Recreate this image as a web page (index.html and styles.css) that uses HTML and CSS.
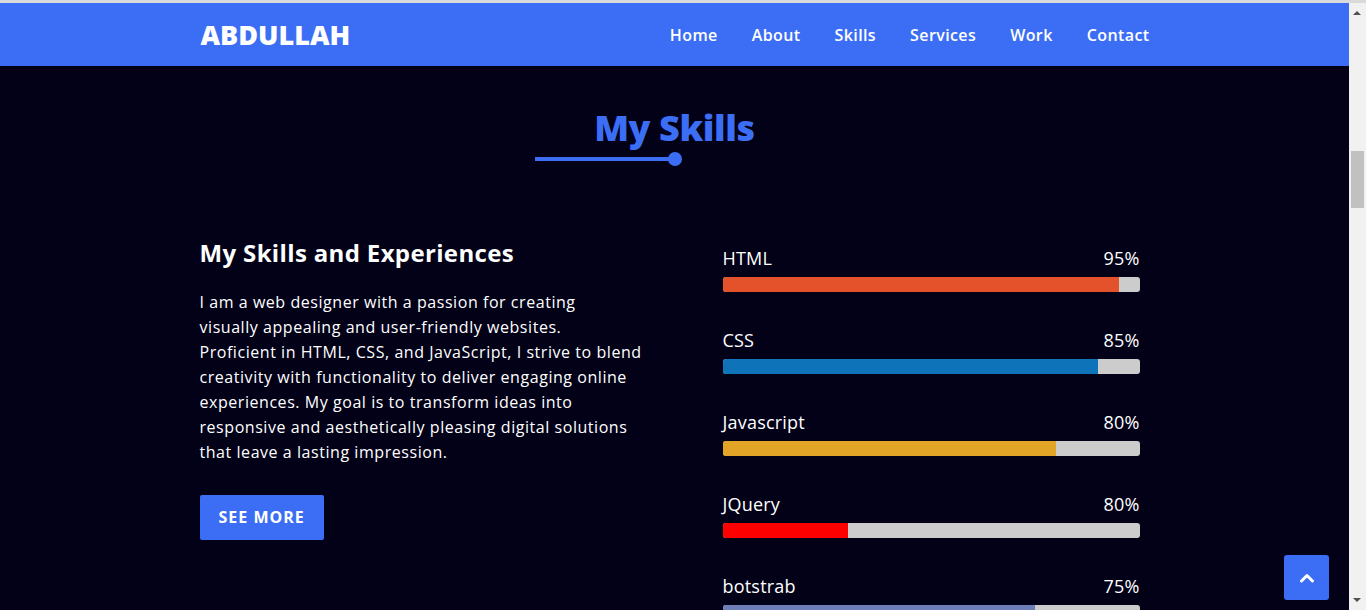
FILE: index.html
```html
<!DOCTYPE html>
<html lang="en">
<head>
<meta charset="utf-8">
<title>Abdullah - Skills</title>
<link rel="stylesheet" href="styles.css">
</head>
<body>
<div class="page">
  <header class="navbar">
    <div class="container nav-inner">
      <a class="logo" href="#">ABDULLAH</a>
      <nav class="menu">
        <a href="#">Home</a>
        <a href="#">About</a>
        <a href="#">Skills</a>
        <a href="#">Services</a>
        <a href="#">Work</a>
        <a href="#">Contact</a>
      </nav>
    </div>
  </header>

  <section class="skills">
    <div class="container">
      <div class="section-title">
        <h2>My Skills</h2>
        <div class="title-line"><span class="line"></span><span class="dot"></span></div>
      </div>
      <div class="skills-content">
        <div class="column left">
          <h3>My Skills and Experiences</h3>
          <p>I am a web designer with a passion for creating<br>
          visually appealing and user-friendly websites.<br>
          Proficient in HTML, CSS, and JavaScript, I strive to blend<br>
          creativity with functionality to deliver engaging online<br>
          experiences. My goal is to transform ideas into<br>
          responsive and aesthetically pleasing digital solutions<br>
          that leave a lasting impression.</p>
          <a class="btn" href="#">See More</a>
        </div>
        <div class="column right">
          <div class="bar">
            <div class="info"><span>HTML</span><span>95%</span></div>
            <div class="track"><div class="fill html" style="width:95%"></div></div>
          </div>
          <div class="bar">
            <div class="info"><span>CSS</span><span>85%</span></div>
            <div class="track"><div class="fill css" style="width:90%"></div></div>
          </div>
          <div class="bar">
            <div class="info"><span>Javascript</span><span>80%</span></div>
            <div class="track"><div class="fill js" style="width:80%"></div></div>
          </div>
          <div class="bar">
            <div class="info"><span>JQuery</span><span>80%</span></div>
            <div class="track"><div class="fill jq" style="width:30%"></div></div>
          </div>
          <div class="bar">
            <div class="info"><span>botstrab</span><span>75%</span></div>
            <div class="track"><div class="fill bs" style="width:75%"></div></div>
          </div>
        </div>
      </div>
    </div>
  </section>
</div>

<a class="scroll-up" href="#" aria-label="Back to top">
  <svg viewBox="0 0 16 16" width="16" height="16"><path d="M2.5 11 L8 5.5 L13.5 11" fill="none" stroke="#fff" stroke-width="3" stroke-linecap="round" stroke-linejoin="round"/></svg>
</a>

<div class="scrollbar" aria-hidden="true">
  <span class="arrow up"></span>
  <span class="thumb"></span>
  <span class="arrow down"></span>
</div>
</body>
</html>
```

FILE: styles.css
```css
* {
  margin: 0;
  padding: 0;
  box-sizing: border-box;
}

body {
  font-family: "Open Sans", "Liberation Sans", sans-serif;
  background: #020117;
  color: #fff;
  border-top: 3px solid #dadada;
}

a {
  text-decoration: none;
  color: inherit;
}

.page {
  margin-right: 17px;
}

.container {
  width: 950px;
  margin: 0 auto;
}

.navbar {
  background: #3c6ef5;
  height: 63px;
}

.nav-inner {
  height: 100%;
  display: flex;
  align-items: center;
  justify-content: space-between;
}

.logo {
  font-size: 27px;
  font-weight: 800;
  color: #fff;
  padding-left: 1px;
}

.menu {
  display: flex;
  gap: 34px;
}

.menu a {
  font-size: 16px;
  font-weight: 600;
  letter-spacing: 0.4px;
  color: #fff;
}

.skills {
  padding-top: 38px;
  padding-bottom: 60px;
}

.section-title {
  display: flex;
  flex-direction: column;
  align-items: center;
}

.section-title h2 {
  font-size: 36px;
  font-weight: 800;
  letter-spacing: -0.4px;
  color: #3c6ef5;
  line-height: 48px;
}

.title-line {
  display: flex;
  align-items: center;
  margin-top: 0;
  transform: translateX(-66px);
}

.title-line .line {
  width: 136px;
  height: 4px;
  background: #3c6ef5;
}

.title-line .dot {
  width: 14px;
  height: 14px;
  border-radius: 50%;
  background: #3c6ef5;
  margin-left: -3px;
}

.skills-content {
  display: flex;
  justify-content: space-between;
  margin-top: 71px;
}

.column.left {
  width: 460px;
}

.column.left h3 {
  font-size: 24px;
  font-weight: 700;
  letter-spacing: 0.35px;
  line-height: 32px;
  margin-bottom: 21px;
}

.column.left p {
  font-size: 16px;
  line-height: 25px;
  font-weight: 400;
  letter-spacing: 0.55px;
  white-space: nowrap;
  margin-bottom: 30px;
}

.btn {
  display: inline-block;
  background: #3c6ef5;
  color: #fff;
  font-size: 16px;
  font-weight: 700;
  text-transform: uppercase;
  letter-spacing: 1px;
  padding: 0 19px;
  height: 45px;
  line-height: 45px;
  border-radius: 2px;
}

.column.right {
  width: 417px;
  margin-right: 10px;
  padding-top: 7px;
  display: flex;
  flex-direction: column;
  gap: 34px;
}

.info {
  display: flex;
  justify-content: space-between;
  font-size: 18px;
  font-weight: 500;
  letter-spacing: 0.2px;
  line-height: 28px;
  margin-bottom: 5px;
}

.track {
  height: 15px;
  background: #cccccc;
  border-radius: 3px;
  overflow: hidden;
}

.fill {
  height: 100%;
}

.fill.html { background: #e3522a; }
.fill.css { background: #0e73b8; }
.fill.js { background: #e2a427; }
.fill.jq { background: #ff0000; }
.fill.bs { background: #6e7eb8; }

.scroll-up {
  position: fixed;
  right: 37px;
  bottom: 10px;
  width: 45px;
  height: 45px;
  background: #3c6ef5;
  border-radius: 3px;
  display: flex;
  align-items: center;
  justify-content: center;
}

.scrollbar {
  position: fixed;
  top: 3px;
  right: 0;
  bottom: 0;
  width: 17px;
  background: #f1f1f1;
}

.scrollbar .thumb {
  position: absolute;
  left: 2px;
  right: 2px;
  top: 148px;
  height: 57px;
  background: #c1c1c1;
}

.scrollbar .arrow {
  position: absolute;
  left: 4px;
  width: 0;
  height: 0;
  border-left: 4px solid transparent;
  border-right: 4px solid transparent;
}

.scrollbar .arrow.up {
  top: 8px;
  border-bottom: 4px solid #505050;
}

.scrollbar .arrow.down {
  bottom: 8px;
  border-top: 4px solid #505050;
}
```
